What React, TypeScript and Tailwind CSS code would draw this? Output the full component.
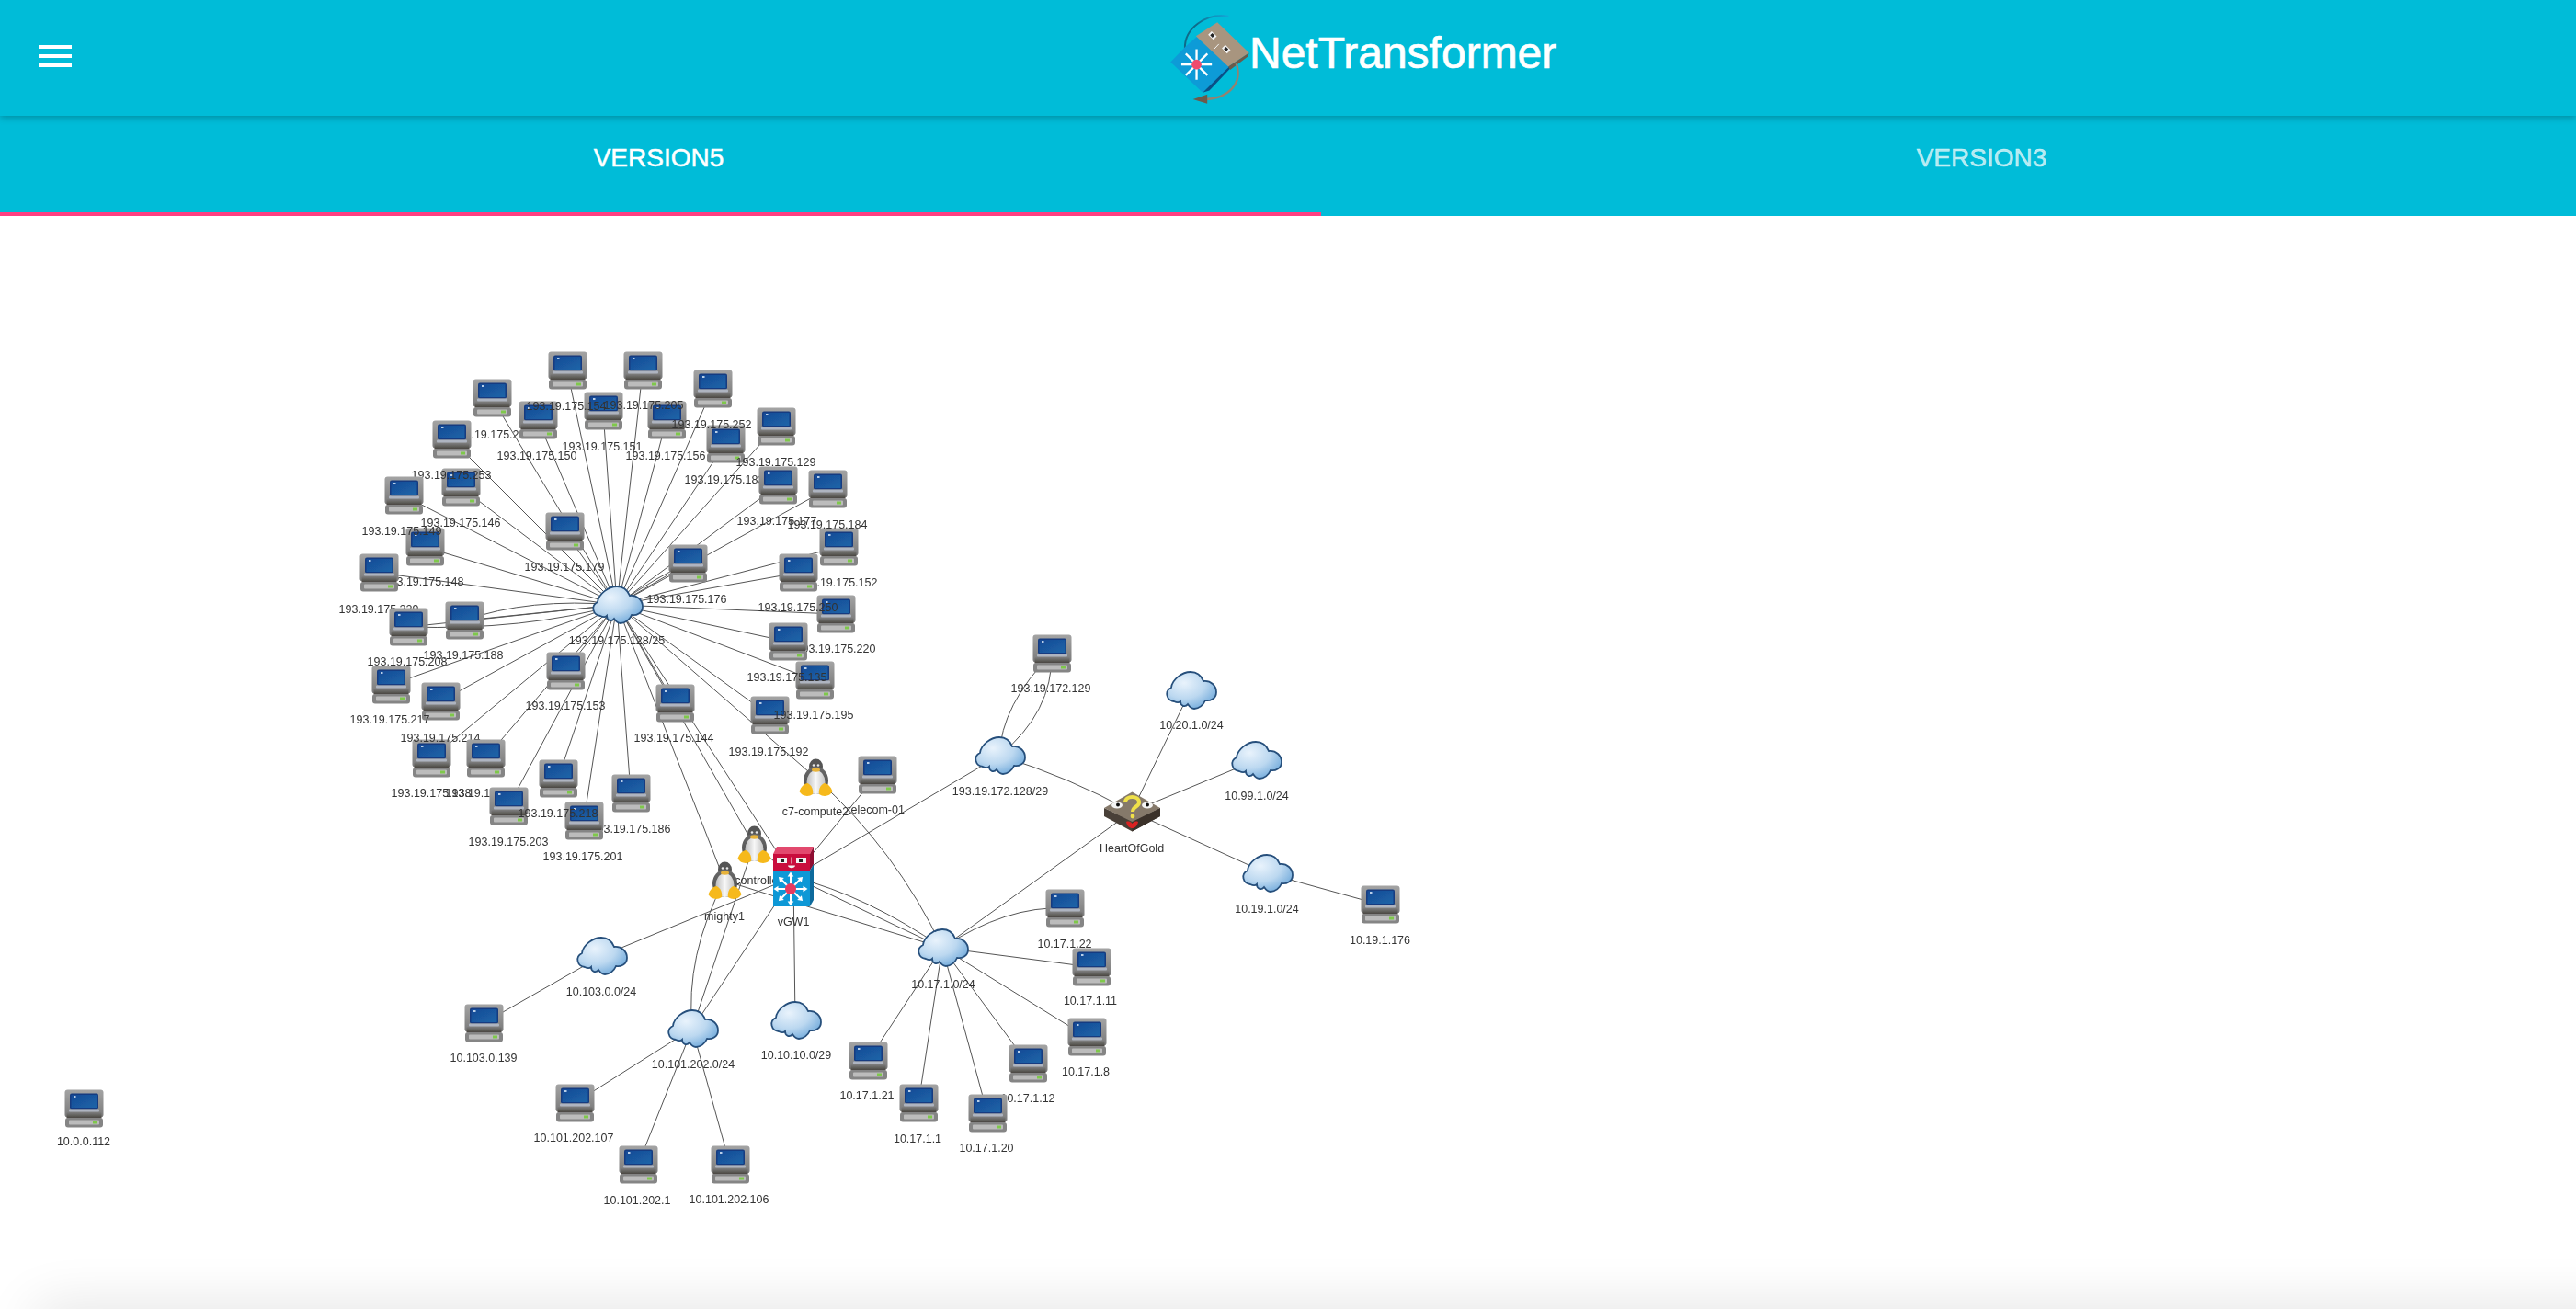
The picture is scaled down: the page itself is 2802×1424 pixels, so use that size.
import React from "react";

type Kind = "pc" | "cloud" | "tux" | "vgw" | "hog";
type N = { k: Kind; x: number; y: number; t: string; lx?: number; ly: number };

const pc = (t: string, x: number, y: number, lx: number, ly: number): N => ({ k: "pc", t, x, y, lx, ly });
const cloud = (t: string, x: number, y: number, lx: number, ly: number): N => ({ k: "cloud", t, x, y, lx, ly });

const P = "193.19.175.";
const ring: N[] = [
  pc(P + "210", 535, 433, 535, 473),
  pc(P + "183", 789, 483, 788, 522),
  pc(P + "151", 656, 447, 655, 486),
  pc(P + "156", 725, 457, 724, 496),
  pc(P + "150", 585, 457, 584, 496),
  pc(P + "146", 501, 530, 501, 569),
  pc(P + "148", 462, 595, 461, 633),
  pc(P + "152", 912, 595, 911, 634),
  pc(P + "220", 909, 668, 909, 706),
  pc(P + "192", 837, 778, 836, 818),
  pc(P + "195", 886, 740, 885, 778),
  pc(P + "135", 857, 698, 856, 737),
  pc(P + "250", 868, 623, 868, 661),
  pc(P + "229", 412, 623, 412, 663),
  pc(P + "208", 444, 682, 443, 720),
  pc(P + "188", 505, 675, 504, 713),
  pc(P + "154", 617, 403, 616, 442),
  pc(P + "205", 699, 403, 700, 441),
  pc(P + "252", 775, 423, 774, 462),
  pc(P + "129", 844, 464, 844, 503),
  pc(P + "253", 491, 478, 491, 517),
  pc(P + "149", 439, 539, 437, 578),
  pc(P + "177", 846, 528, 845, 567),
  pc(P + "184", 900, 532, 900, 571),
  pc(P + "179", 614, 578, 614, 617),
  pc(P + "176", 748, 613, 747, 652),
  pc(P + "138", 469, 825, 469, 863),
  pc(P + "214", 479, 763, 479, 803),
  pc(P + "217", 425, 745, 424, 783),
  pc(P + "153", 615, 730, 615, 768),
  pc(P + "144", 734, 765, 733, 803),
  pc(P + "191", 528, 825, 528, 863),
  pc(P + "203", 553, 877, 553, 916),
  pc(P + "186", 686, 863, 686, 902),
  pc(P + "201", 635, 893, 634, 932),
  pc(P + "218", 607, 847, 607, 885),
];

const HUB = [671, 658];
const N17 = [1025, 1031];
const N172 = [1087, 822];
const VGW = [863, 954];
const HOG = [1231, 883];
const CTRL = [820, 919];
const MIGHTY = [788, 958];
const C7 = [887, 846];
const TEL = [954, 843];
const N103 = [654, 1040];
const N101 = [753, 1119];
const N10 = [865, 1110];
const N20 = [1295, 751];
const N99 = [1366, 827];
const N19 = [1378, 950];

const other: N[] = [
  cloud("193.19.175.128/25", HUB[0], HUB[1], 671, 697),
  pc("193.19.172.129", 1144, 711, 1143, 749),
  cloud("193.19.172.128/29", N172[0], N172[1], 1088, 861),
  cloud("10.20.1.0/24", N20[0], N20[1], 1296, 789),
  cloud("10.99.1.0/24", N99[0], N99[1], 1367, 866),
  { k: "hog", t: "HeartOfGold", x: HOG[0], y: HOG[1], lx: 1231, ly: 923 },
  cloud("10.19.1.0/24", N19[0], N19[1], 1378, 989),
  pc("10.19.1.176", 1501, 984, 1501, 1023),
  pc("10.17.1.22", 1158, 988, 1158, 1027),
  pc("10.17.1.11", 1187, 1052, 1186, 1089),
  pc("10.17.1.8", 1182, 1128, 1181, 1166),
  pc("10.17.1.21", 944, 1154, 943, 1192),
  pc("10.17.1.12", 1118, 1157, 1118, 1195),
  pc("10.17.1.1", 999, 1200, 998, 1239),
  pc("10.17.1.20", 1074, 1211, 1073, 1249),
  cloud("10.17.1.0/24", N17[0], N17[1], 1026, 1071),
  { k: "tux", t: "c7-compute2", x: C7[0], y: C7[1], lx: 887, ly: 883 },
  pc("telecom-01", TEL[0], TEL[1], 953, 881),
  { k: "tux", t: "controller", x: CTRL[0], y: CTRL[1], lx: 825, ly: 958 },
  { k: "tux", t: "mighty1", x: MIGHTY[0], y: MIGHTY[1], lx: 788, ly: 997 },
  { k: "vgw", t: "vGW1", x: VGW[0], y: VGW[1], lx: 863, ly: 1003 },
  cloud("10.10.10.0/29", N10[0], N10[1], 866, 1148),
  cloud("10.103.0.0/24", N103[0], N103[1], 654, 1079),
  pc("10.103.0.139", 526, 1113, 526, 1151),
  cloud("10.101.202.0/24", N101[0], N101[1], 754, 1158),
  pc("10.101.202.107", 625, 1200, 624, 1238),
  pc("10.101.202.1", 694, 1267, 693, 1306),
  pc("10.101.202.106", 794, 1267, 793, 1305),
  pc("10.0.0.112", 91, 1206, 91, 1242),
];

const nodes = [...ring, ...other];

type L = [number[], number[], number?, number?];
const links: L[] = [
  ...ring.map((n): L => [[n.x, n.y], HUB]),
  [[444, 682], HUB, 570, 686],
  [[505, 675], HUB, 575, 650],
  [[748, 613], HUB, 716, 626],
  [HUB, CTRL],
  [HUB, VGW],
  [HUB, MIGHTY],
  [HUB, C7],
  [[1144, 711], N172, 1089, 767],
  [[1144, 711], N172, 1145, 775],
  [N172, HOG, 1162, 845],
  [VGW, N172],
  [HOG, N20],
  [HOG, N99],
  [HOG, N19],
  [HOG, N17],
  [N19, [1501, 984]],
  [N17, [1158, 988], 1095, 985],
  [N17, [1187, 1052]],
  [N17, [1182, 1128]],
  [N17, [1118, 1157]],
  [N17, [1074, 1211]],
  [N17, [999, 1200]],
  [N17, [944, 1154]],
  [C7, N17, 975, 925],
  [VGW, N17, 944, 975],
  [VGW, N17],
  [MIGHTY, N17, 890, 990],
  [VGW, N10],
  [VGW, N101],
  [VGW, TEL],
  [VGW, N103],
  [CTRL, VGW],
  [N103, [526, 1113]],
  [MIGHTY, N101, 745, 1040],
  [CTRL, N101],
  [N101, [625, 1200]],
  [N101, [694, 1267]],
  [N101, [794, 1267]],
];

const SIZE: Record<Kind, [number, number]> = {
  pc: [43, 42],
  cloud: [58, 44],
  tux: [37, 42],
  vgw: [46, 68],
  hog: [61, 44],
};

function Sprites() {
  const star = [0, 45, 90, 135, 180, 225, 270, 315];
  return (
    <svg width="0" height="0" className="absolute">
      <defs>
        <filter id="soft" x="-10%" y="-10%" width="120%" height="120%">
          <feGaussianBlur stdDeviation="0.6" />
        </filter>
        <linearGradient id="pcBody" x1="0" y1="0" x2="0" y2="1">
          <stop offset="0" stopColor="#a4a4a4" />
          <stop offset="1" stopColor="#7a7a7a" />
        </linearGradient>
        <linearGradient id="pcScreen" x1="0" y1="0" x2="1" y2="1">
          <stop offset="0" stopColor="#174a96" />
          <stop offset="1" stopColor="#1c65a8" />
        </linearGradient>
        <linearGradient id="pcBand" x1="0" y1="0" x2="0" y2="1">
          <stop offset="0" stopColor="#7e7e7e" />
          <stop offset="1" stopColor="#46423c" />
        </linearGradient>
        <radialGradient id="cloudFill" cx="0.35" cy="0.3" r="0.85">
          <stop offset="0" stopColor="#e9f3fc" />
          <stop offset="0.5" stopColor="#bcd8f0" />
          <stop offset="1" stopColor="#5f9fd6" />
        </radialGradient>
        <linearGradient id="tuxBelly" x1="0" y1="0" x2="1" y2="0">
          <stop offset="0" stopColor="#bdbdbd" />
          <stop offset="0.5" stopColor="#f7f7f7" />
          <stop offset="1" stopColor="#c5c5c5" />
        </linearGradient>
        <linearGradient id="tuxBody" x1="0" y1="0" x2="0" y2="1">
          <stop offset="0" stopColor="#6a6a6a" />
          <stop offset="1" stopColor="#4a4a4a" />
        </linearGradient>
        <linearGradient id="logoArc" x1="1" y1="0" x2="0" y2="1">
          <stop offset="0" stopColor="#12a8d8" />
          <stop offset="0.5" stopColor="#0f6a88" />
          <stop offset="1" stopColor="#0f6a88" />
        </linearGradient>

        <symbol id="i-pc" viewBox="0 0 43 42">
          <g filter="url(#soft)">
            <rect x="0.5" y="0.5" width="42" height="30" rx="3" fill="url(#pcBody)" />
            <rect x="6" y="4.5" width="31" height="17" rx="2" fill="#123a80" />
            <rect x="7.5" y="6" width="28" height="14" fill="url(#pcScreen)" />
            <rect x="10" y="7" width="2.5" height="2" fill="#b9cfe8" />
            <rect x="5" y="21.5" width="33" height="3" rx="1" fill="#aeb4c0" />
            <rect x="2.5" y="25" width="38" height="6.5" rx="1" fill="url(#pcBand)" />
            <rect x="1" y="31" width="41" height="10.5" rx="3" fill="#858585" />
            <rect x="5" y="33.5" width="33" height="5" rx="1" fill="#bcbcbc" />
            <rect x="31" y="34.5" width="5" height="3" fill="#7fc84c" />
          </g>
        </symbol>

        <symbol id="i-cloud" viewBox="0 0 58 44">
          <path
            d="M11 34 C3 33 0 23 8 19 C9 10 20 2 29 2 C37 2 41 7 43 12 C51 11 57 17 57 24 C57 31 50 34 45 33 C43 38 38 42 33 42 C30 42 28 40 26 37 C23 41 18 39 18 34 C16 36 13 35 11 34 Z"
            fill="url(#cloudFill)"
            stroke="#27507c"
            strokeWidth="1.8"
            filter="url(#soft)"
          />
        </symbol>

        <symbol id="i-tux" viewBox="0 0 37 42">
          <g filter="url(#soft)">
            <ellipse cx="18.5" cy="9" rx="7.5" ry="8.5" fill="#555555" />
            <ellipse cx="18.5" cy="24" rx="13.5" ry="15" fill="url(#tuxBody)" />
            <ellipse cx="18.5" cy="26" rx="10" ry="13" fill="url(#tuxBelly)" />
            <ellipse cx="18.5" cy="12.5" rx="4.5" ry="2.2" fill="#e8b33a" />
            <circle cx="16" cy="7.5" r="1.3" fill="#e8e8e8" />
            <circle cx="21" cy="7.5" r="1.3" fill="#e8e8e8" />
            <path d="M0.5 36 C2 31 6 27 9.5 27 C14 29 16 35 15 39 C10 42.5 3 41 0.5 36 Z" fill="#f6b91a" />
            <path d="M36.5 36 C35 31 31 27 27.5 27 C23 29 21 35 22 39 C27 42.5 34 41 36.5 36 Z" fill="#f6b91a" />
          </g>
        </symbol>

        <symbol id="i-vgw" viewBox="0 0 46 68">
          <g filter="url(#soft)">
            <polygon points="1,9 5,1 45,1 41,9" fill="#e2496e" />
            <rect x="1" y="9" width="40" height="18" fill="#c9103c" />
            <polygon points="41,9 45,1 45,20 41,27" fill="#8f0f30" />
            <rect x="1" y="27" width="40" height="39" fill="#1198d6" />
            <polygon points="41,27 45,20 45,59 41,66" fill="#0b6a9c" />
            <rect x="5" y="13" width="11" height="6" fill="#f3f3f3" />
            <rect x="26" y="13" width="11" height="6" fill="#f3f3f3" />
            <rect x="9" y="14" width="4" height="4" fill="#222" />
            <rect x="29" y="14" width="4" height="4" fill="#222" />
            <rect x="20.5" y="12.5" width="1.5" height="7" fill="#f3f3f3" />
            <path d="M17 21.5 H25 C24.5 25 17.5 25 17 21.5 Z" fill="#f3f3f3" />
            {star.map((a) => (
              <g key={a} transform={`rotate(${a} 20 47)`}>
                <line x1="20" y1="47" x2="20" y2="31.5" stroke="#fff" strokeWidth="2" />
                <polygon points="20,28.5 16.7,33.5 23.3,33.5" fill="#fff" />
              </g>
            ))}
            <circle cx="20" cy="47" r="6" fill="#e63a60" />
          </g>
        </symbol>

        <symbol id="i-hog" viewBox="0 0 61 44">
          <g filter="url(#soft)">
            <polygon points="0,18 0,27 30.5,43.5 61,27 61,18 30.5,32" fill="#4a4138" />
            <polygon points="30.5,32 30.5,43.5 61,27 61,18" fill="#3a322b" />
            <polygon points="30.5,0.5 61,18 30.5,33 0,18" fill="#85796b" />
            <ellipse cx="14" cy="15" rx="6" ry="3.4" fill="#f4f4f4" />
            <ellipse cx="47" cy="15" rx="6" ry="3.4" fill="#f4f4f4" />
            <circle cx="15" cy="14.5" r="2" fill="#111" />
            <circle cx="47" cy="14.5" r="2" fill="#111" />
            <path
              d="M23 12 C23 4 38 4 38 12 C38 17 31 16 31 22"
              fill="none"
              stroke="#efe04a"
              strokeWidth="4"
            />
            <circle cx="31" cy="27" r="2.4" fill="#efe04a" />
            <path d="M24 33 C27 32 29 33 30.5 35 C32 33 34 32 37 33 C36 38 33 40 30.5 40 C28 40 25 38 24 33 Z" fill="#d92420" />
          </g>
        </symbol>
      </defs>
    </svg>
  );
}

function Logo() {
  const star = [0, 45, 90, 135, 180, 225, 270, 315];
  return (
    <svg viewBox="70 30 290 310" className="w-[97px] h-[103px] shrink-0">
      <path d="M275 50 C200 38 130 90 132 155" fill="none" stroke="url(#logoArc)" strokeWidth="6" />
      <polygon points="85,200 135,148 170,118 280,215 190,300" fill="#0d9bd7" />
      <polygon points="190,300 280,212 300,200 212,293" fill="#0b4f86" />
      <polygon points="168,115 238,70 342,170 274,215" fill="#a8957f" />
      <polygon points="274,215 342,170 338,182 280,226" fill="#6b5b4b" />
      <g transform="rotate(45 222 113)">
        <rect x="210" y="105" width="24" height="16" fill="#f4f4f4" />
        <rect x="216" y="108" width="11" height="10" fill="#222" />
      </g>
      <g transform="rotate(45 267 158)">
        <rect x="255" y="150" width="24" height="16" fill="#f4f4f4" />
        <rect x="261" y="153" width="11" height="10" fill="#222" />
      </g>
      <line x1="228" y1="157" x2="243" y2="141" stroke="#f4f4f4" strokeWidth="3" />
      {star.map((a) => (
        <line key={a} x1="170" y1="208" x2="170" y2="158" stroke="#fff" strokeWidth="7" transform={`rotate(${a} 170 208)`} />
      ))}
      <circle cx="170" cy="208" r="16" fill="#ee4b6e" />
      <path d="M300 205 C322 270 275 320 195 322" fill="none" stroke="#94826f" strokeWidth="7" />
      <polygon points="158,322 205,306 205,336" fill="#6d5a4a" />
    </svg>
  );
}

function Node({ n }: { n: N }) {
  const [w, h] = SIZE[n.k];
  const lx = (n.lx ?? n.x) - n.x;
  return (
    <div className="absolute w-0 h-0" style={{ left: n.x, top: n.y - 235 }}>
      <svg
        className="absolute max-w-none"
        width={w}
        height={h}
        style={{ left: -w / 2, top: -h / 2 }}
      >
        <use href={`#i-${n.k}`} width={w} height={h} />
      </svg>
      <div
        className="absolute -translate-x-1/2 whitespace-nowrap text-[12.5px] leading-[14px] text-[#333333] blur-[0.3px] font-['Liberation_Sans',Arial,sans-serif]"
        style={{ left: lx, top: n.ly - n.y - 7 }}
      >
        {n.t}
      </div>
    </div>
  );
}

export default function App() {
  return (
    <div className="relative h-[1424px] w-[2802px] overflow-hidden bg-white font-['Liberation_Sans',Arial,sans-serif]">
      <Sprites />
      <header className="relative z-10 flex h-[126px] items-center bg-[#00bcd8] pl-[42px] shadow-[0_2px_7px_rgba(0,0,0,0.26)]">
        <div className="flex w-9 -translate-y-[2px] flex-col gap-1.5">
          <span className="h-1 bg-white" />
          <span className="h-1 bg-white" />
          <span className="h-1 bg-white" />
        </div>
        <div className="ml-[1190px] flex -translate-y-[1px] items-center">
          <Logo />
          <span className="-ml-[6px] -translate-y-1 text-[48px] leading-none text-white [-webkit-text-stroke:0.7px_white]">NetTransformer</span>
        </div>
      </header>
      <nav className="flex h-[109px] w-[2874px] bg-[#00bcd8]">
        <div className="flex w-[1437px] items-center justify-center border-b-4 border-[#ff4081] pb-[13px] pr-1 text-[28px] font-normal text-white [-webkit-text-stroke:0.5px_white]">
          VERSION5
        </div>
        <div className="flex w-[1437px] items-center justify-center pb-[17px] text-[28px] font-normal text-white/70 [-webkit-text-stroke:0.5px_rgba(255,255,255,0.7)]">
          VERSION3
        </div>
      </nav>
      <main className="relative h-[1189px]">
        <svg className="absolute inset-0 h-full w-full" viewBox="0 235 2802 1189" fill="none" stroke="#555555" strokeWidth="1">
          {links.map(([a, b, cx, cy], i) => (
            <path
              key={i}
              d={
                cx === undefined
                  ? `M${a[0]} ${a[1]} L${b[0]} ${b[1]}`
                  : `M${a[0]} ${a[1]} Q${cx} ${cy} ${b[0]} ${b[1]}`
              }
            />
          ))}
        </svg>
        {nodes.map((n) => (
          <Node key={n.t} n={n} />
        ))}
      </main>
      <div className="absolute left-10 right-[-100px] top-full h-10 shadow-[0_0_60px_rgba(0,0,0,0.14)]" />
    </div>
  );
}
